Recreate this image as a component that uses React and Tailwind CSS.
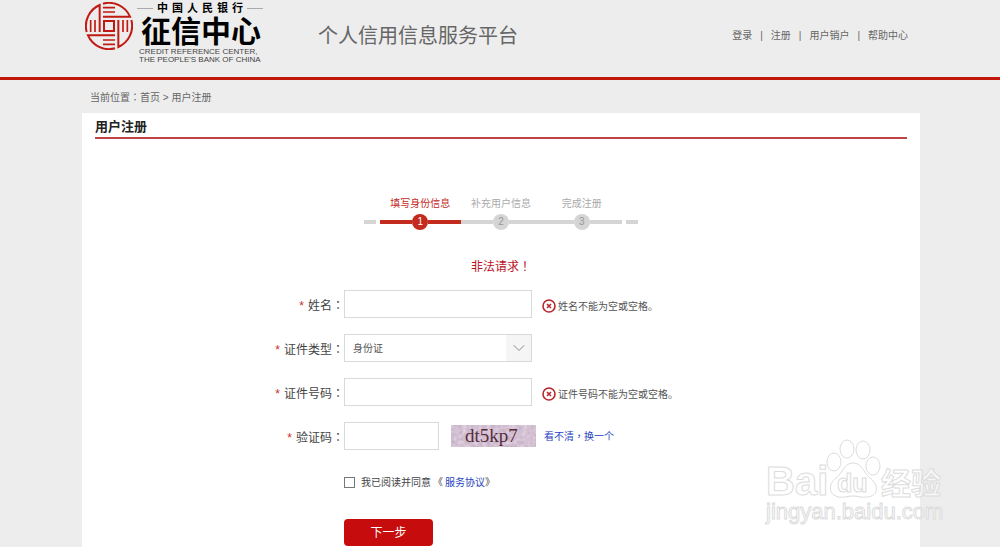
import { useState } from 'react'
import { ChevronDown } from 'lucide-react'

const NAV = ['登录', '注册', '用户销户', '帮助中心']
const STEPS = ['填写身份信息', '补充用户信息', '完成注册']

// one blade of the seal, drawn four times around the centre
function Seal() {
  return (
    <svg viewBox="-72 -72 144 144" className="size-12 shrink-0" fill="none" stroke="#c11a12" strokeWidth="6">
      {[0, 90, 180, 270].map((deg) => (
        <g key={deg} transform={`rotate(${deg})`}>
          <path d="M-18 -28H63A69 69 0 0 0 -18 -67" />
          <path d="M-18 -55H18M-18 -42H18" strokeWidth="5" />
        </g>
      ))}
      <path d="M-15 -15H15V15H-15Z" />
    </svg>
  )
}

function Logo() {
  return (
    <a href="#" className="flex gap-1 text-black">
      <span className="pt-0.5 pl-px"><Seal /></span>
      <span className="flex w-[126px] flex-col">
        <span className="flex items-center gap-1 text-[11px] leading-4 font-bold whitespace-nowrap">
          <i className="h-px flex-1 bg-[#aaa]" />
          <span className="flex gap-1">
            {[...'中国人民银行'].map((c) => <span key={c}>{c}</span>)}
          </span>
          <i className="h-px flex-1 bg-[#aaa]" />
        </span>
        <span className="pl-1 text-[30px] leading-8 font-bold whitespace-nowrap">征信中心</span>
        <span className="pl-0.5 text-[8px] leading-2 whitespace-nowrap text-[#444]">
          CREDIT REFERENCE CENTER,<br />THE PEOPLE'S BANK OF CHINA
        </span>
      </span>
    </a>
  )
}

// full-width punctuation centred in its box
function Mark({ children }) {
  return <span lang="zh-TW" className="font-['Noto_Sans_CJK_TC',sans-serif]">{children}</span>
}

function Row({ label, id, children }) {
  return (
    <div className="flex h-7 items-center">
      <label htmlFor={id} className="w-[262px] shrink-0 pt-0.5 text-right text-[12px] leading-4 text-[#444]">
        <span className="mr-1 text-[#c8321f]">*</span>{label}<Mark>：</Mark>
      </label>
      {children}
    </div>
  )
}

function FieldError({ children }) {
  return (
    <span role="alert" className="ml-2.5 flex items-center gap-0.5 pt-1 text-[10px] text-[#555]">
      <svg viewBox="0 0 14 14" className="size-3.5" fill="none" stroke="#b8262b" strokeWidth="1.6">
        <circle cx="7" cy="7" r="6" />
        <path d="M5 5L9 9M9 5L5 9" />
      </svg>
      {children}
    </span>
  )
}

function Captcha() {
  return (
    <svg viewBox="0 0 85 22" className="ml-3 h-[22px] w-[85px]" role="img" aria-label="验证码">
      <filter id="grain" colorInterpolationFilters="sRGB">
        <feTurbulence type="fractalNoise" baseFrequency="0.25" numOctaves="3" seed="4" />
        <feColorMatrix values="0.2 0 0 0 0.73  0.2 0 0 0 0.66  0.2 0 0 0 0.73  0 0 0 0 1" />
      </filter>
      <rect width="85" height="22" filter="url(#grain)" />
      <text x="14" y="17" fontSize="19" fill="#552c38" className="font-['Liberation_Serif',serif]">dt5kp7</text>
    </svg>
  )
}

function Steps({ current }) {
  return (
    <ol className="mx-auto mt-[57px] flex w-[274px] items-end gap-1 text-center text-[10px]">
      <li aria-hidden="true" className="mb-1.5 h-1 w-3 bg-[#d5d5d5]" />
      <li className="flex-1">
        <ol className="flex">
          {STEPS.map((s, i) => {
            const on = i === current
            return (
              <li key={s} className="flex-1">
                <div className={`leading-4 whitespace-nowrap ${on ? 'text-[#c22b1e]' : 'text-[#aaa]'}`}>{s}</div>
                <div className="mt-0.5 flex items-center">
                  <i className={`h-1 flex-1 ${on ? 'bg-[#c22b1e]' : 'bg-[#d5d5d5]'}`} />
                  <span className={`size-4 rounded-full leading-4 ${on ? 'bg-[#c22b1e] text-white' : 'bg-[#d5d5d5] text-[#999]'}`}>{i + 1}</span>
                  <i className={`h-1 flex-1 ${on ? 'bg-[#c22b1e]' : 'bg-[#d5d5d5]'}`} />
                </div>
              </li>
            )
          })}
        </ol>
      </li>
      <li aria-hidden="true" className="mb-1.5 h-1 w-3 bg-[#d5d5d5]" />
    </ol>
  )
}

function Watermark() {
  return (
    <svg viewBox="0 0 184 90" className="pointer-events-none absolute right-[52px] bottom-5 h-[90px] w-[184px]"
      fill="#fff" fillOpacity="0.6" stroke="#dcdcdc" strokeWidth="1">
      <ellipse cx="70" cy="25" rx="7" ry="9" />
      <ellipse cx="83" cy="12" rx="7" ry="9" />
      <ellipse cx="99" cy="13" rx="7" ry="9" />
      <ellipse cx="109" cy="29" rx="7" ry="9" />
      <path d="M89 26C98 26 99 35 106 41C115 48 115 59 103 60C97 61 95 59 89 59C83 59 80 61 75 60C64 58 64 47 72 41C79 36 80 26 89 26Z" />
      <g className="font-['Liberation_Sans','Noto_Sans_CJK_SC',sans-serif] font-bold">
        <text x="2" y="58" fontSize="40">Bai</text>
        <text x="73" y="55" fontSize="25">du</text>
        <text x="117" y="57" fontSize="30">经验</text>
      </g>
      <text x="2" y="82" fontSize="22" className="font-['Liberation_Sans',sans-serif]">jingyan.baidu.com</text>
    </svg>
  )
}

const field = 'h-7 border border-[#d9d9d9] bg-white px-2 text-[10px] text-[#555] outline-none focus:border-[#999]'

export default function App() {
  const [agreed, setAgreed] = useState(false)

  return (
    <div className="relative flex min-h-screen flex-col bg-[#ededed] font-['Liberation_Sans','Noto_Sans_CJK_SC',sans-serif]">
      <header className="border-b-3 border-[#c4170c] pl-0.5">
        <div className="mx-auto flex h-[77px] max-w-[838px] pr-3 pl-0.5">
          <Logo />
          <h1 className="ml-[55px] pt-5 text-[20px] leading-8 text-[#666]">个人信用信息服务平台</h1>
          <nav className="ml-auto flex items-start gap-2 pt-7 text-[10px] leading-4 text-[#666]">
            {NAV.map((n, i) => (
              <span key={n} className="flex gap-2">
                {i > 0 && <span>|</span>}
                <a href="#">{n}</a>
              </span>
            ))}
          </nav>
        </div>
      </header>

      <div className="flex flex-1 flex-col pl-0.5">
        <nav className="mx-auto h-[33px] w-full max-w-[838px] px-2 pt-[9px] text-[10px] leading-4 text-[#666]">
          当前位置<Mark>：</Mark><a href="#">首页</a> &gt; <a href="#">用户注册</a>
        </nav>

        <main className="mx-auto w-full max-w-[838px] flex-1 bg-white">
          <h2 className="mx-[13px] border-b-2 border-[#bf4346] pt-1 text-[13px] leading-5 font-bold text-[#222]">用户注册</h2>

          <Steps current={0} />

          <p className="mt-6 text-center text-[12px] leading-6 text-[#b8141f]">非法请求<Mark>！</Mark></p>

          <form className="mt-[11px]" onSubmit={(e) => e.preventDefault()}>
            <div className="flex flex-col gap-4">
              <Row label="姓名" id="name">
                <input id="name" type="text" className={`${field} w-[188px]`} />
                <FieldError>姓名不能为空或空格。</FieldError>
              </Row>
              <Row label="证件类型" id="type">
                <span className="relative w-[188px]">
                  <select id="type" className={`${field} w-full appearance-none`}>
                    <option>身份证</option>
                  </select>
                  <span className="pointer-events-none absolute inset-y-px right-px flex w-[25px] items-center justify-center bg-[#f5f5f5]">
                    <ChevronDown size={20} strokeWidth={1} color="#777" />
                  </span>
                </span>
              </Row>
              <Row label="证件号码" id="number">
                <input id="number" type="text" className={`${field} w-[188px]`} />
                <FieldError>证件号码不能为空或空格。</FieldError>
              </Row>
              <Row label="验证码" id="code">
                <input id="code" type="text" className={`${field} w-[95px]`} />
                <Captcha />
                <a href="#" className="ml-2 text-[10px] text-[#1f3fc0]">看不清<Mark>，</Mark>换一个</a>
              </Row>
            </div>

            <div className="mt-6 ml-[262px] flex h-4 items-center text-[10px] text-[#444]">
              <input id="agree" type="checkbox" checked={agreed} onChange={(e) => setAgreed(e.target.checked)}
                className="mr-1.5 size-[11px] appearance-none border border-[#777] bg-white checked:bg-[#c60c0c]" />
              <label htmlFor="agree">我已阅读并同意</label>
              <span className="ml-0.5">《</span>
              <a href="#" className="ml-0.5 text-[#1f3fc0]">服务协议</a>》
            </div>

            <button type="submit" className="mt-[29px] ml-[262px] block h-[27px] w-[89px] rounded bg-[#c60c0c] text-[12px] text-white">
              下一步
            </button>
          </form>
        </main>
      </div>

      <Watermark />
    </div>
  )
}
